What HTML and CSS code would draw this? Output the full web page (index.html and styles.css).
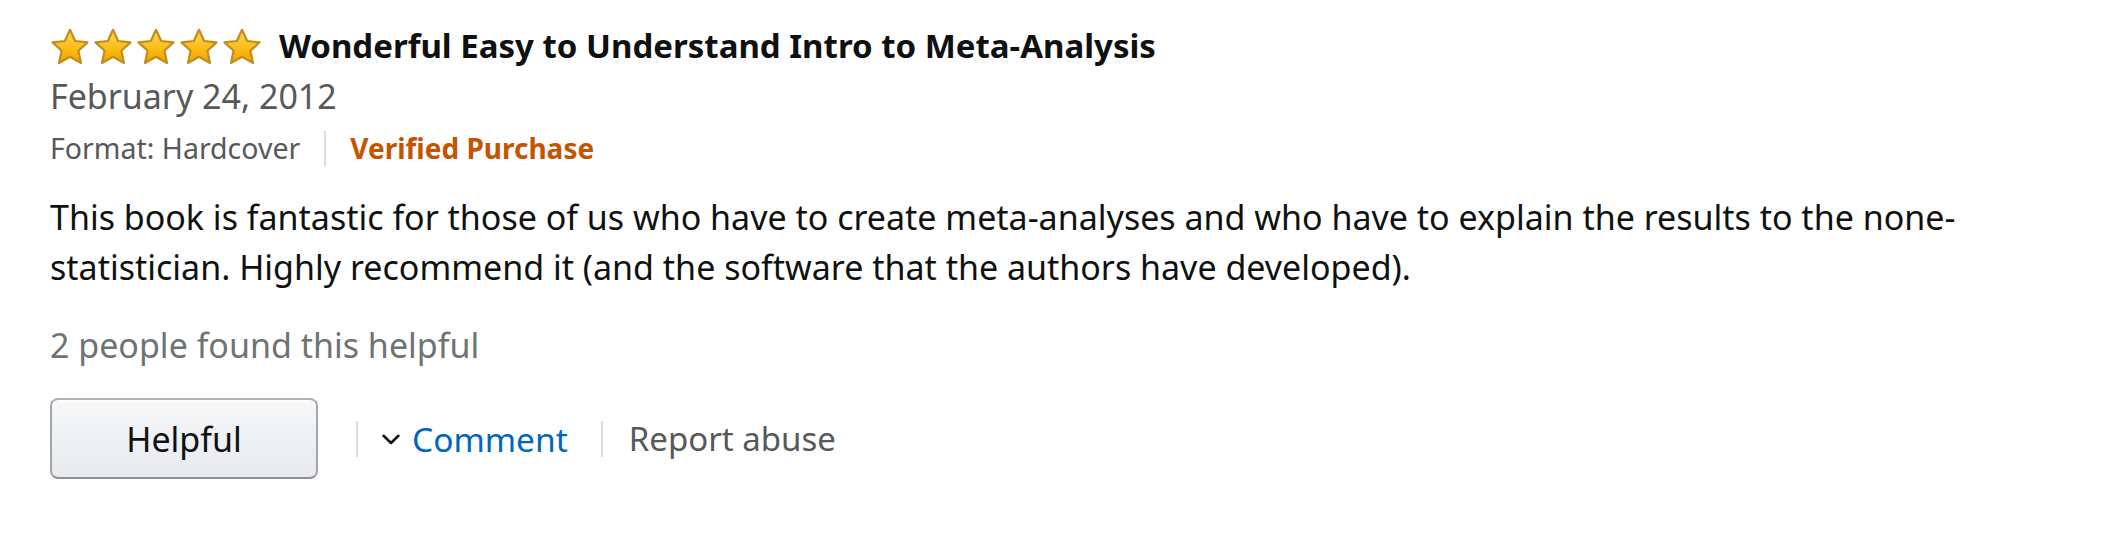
FILE: index.html
```html
<!DOCTYPE html>
<html lang="en">
<head>
<meta charset="utf-8">
<title>Review</title>
<link rel="stylesheet" href="styles.css">
</head>
<body>
<svg class="defs" width="0" height="0" aria-hidden="true">
  <defs>
    <linearGradient id="starFill" x1="0" y1="0" x2="0" y2="1">
      <stop offset="0" stop-color="#ffd75a"/>
      <stop offset="0.55" stop-color="#fbbd16"/>
      <stop offset="1" stop-color="#f2a200"/>
    </linearGradient>
    <symbol id="star" viewBox="0 0 40 38">
      <path d="M20 1.8l5.2 11.2 12.3 1.4-9.1 8.4 2.6 12.2-11-6.2-11 6.2 2.6-12.2-9.1-8.4 12.3-1.4z" fill="url(#starFill)" stroke="#c08d1e" stroke-width="2.2" stroke-linejoin="round"/>
    </symbol>
  </defs>
</svg>
<div class="review">
  <div class="head">
    <div class="stars">
      <svg class="star"><use href="#star"/></svg>
      <svg class="star"><use href="#star"/></svg>
      <svg class="star"><use href="#star"/></svg>
      <svg class="star"><use href="#star"/></svg>
      <svg class="star"><use href="#star"/></svg>
    </div>
    <span class="title">Wonderful Easy to Understand Intro to Meta-Analysis</span>
  </div>
  <div class="date">February 24, 2012</div>
  <div class="meta">
    <span class="format">Format: Hardcover</span>
    <span class="vsep"></span>
    <span class="verified">Verified Purchase</span>
  </div>
  <p class="body">This book is fantastic for those of us who have to create meta-analyses and who have to explain the results to the none-statistician. Highly recommend it (and the software that the authors have developed).</p>
  <div class="helpful-count">2 people found this helpful</div>
  <div class="actions">
    <button class="btn">Helpful</button>
    <span class="vsep"></span>
    <a class="comment" href="#"><svg class="chev" viewBox="0 0 18 11"><path d="M1.6 1.8l7.4 7.2 7.4-7.2" fill="none" stroke="#0f1111" stroke-width="2.6" stroke-linecap="round" stroke-linejoin="round"/></svg><span>Comment</span></a>
    <span class="vsep"></span>
    <a class="report" href="#">Report abuse</a>
  </div>
</div>
</body>
</html>
```
FILE: styles.css
```css
html, body { background: #fff; }
body {
  margin: 0;
  padding: 21px 50px 0 50px;
  font-family: "Noto Sans", "Open Sans", Arial, sans-serif;
  color: #0f1111;
}
.defs { position: absolute; width: 0; height: 0; overflow: hidden; }

.head {
  display: flex;
  align-items: center;
  height: 50px;
}
.stars {
  display: flex;
  gap: 3px;
  margin-right: 17px;
  margin-top: 2px;
}
.star { width: 40px; height: 38px; display: block; }
.title {
  font-size: 33px;
  line-height: 50px;
  font-weight: 700;
  color: #0f1111;
}
.date {
  font-size: 34px;
  line-height: 50px;
  color: #565959;
}
.meta {
  display: flex;
  align-items: center;
  height: 45px;
  margin-top: 5px;
  font-size: 28.5px;
  line-height: 45px;
}
.format { color: #565959; }
.vsep {
  display: block;
  width: 2px;
  height: 36px;
  background: #dddddd;
}
.meta .vsep { margin: 0 24px 0 24px; }
.verified { color: #c45500; font-weight: 700; font-size: 28px; }

.body {
  margin: 21px 0 0 0;
  font-size: 34px;
  line-height: 50px;
  color: #0f1111;
}
.helpful-count {
  margin-top: 28px;
  font-size: 34px;
  line-height: 50px;
  color: #6f7373;
}
.actions {
  display: flex;
  align-items: center;
  margin-top: 28px;
}
.btn {
  box-sizing: border-box;
  width: 268px;
  height: 81px;
  border: 2px solid;
  border-color: #adb1b8 #a2a6ac #8d9096;
  border-radius: 8px;
  background: linear-gradient(#f7f8fa, #e7e9ec);
  box-shadow: inset 0 2px 0 rgba(255,255,255,.6);
  font-family: inherit;
  font-size: 34px;
  color: #0f1111;
  padding: 0;
}
.actions .vsep { margin: 0 24px 0 38px; }
.actions .vsep:last-of-type { margin: 0 26px 0 33px; }
.comment {
  display: flex;
  align-items: center;
  text-decoration: none;
  color: #0066c0;
  font-size: 33.5px;
  line-height: 50px;
}
.chev { width: 18px; height: 11px; margin-right: 12px; margin-top: 2px; display: block; }
.report {
  text-decoration: none;
  color: #565959;
  font-size: 33px;
  line-height: 50px;
}
```
